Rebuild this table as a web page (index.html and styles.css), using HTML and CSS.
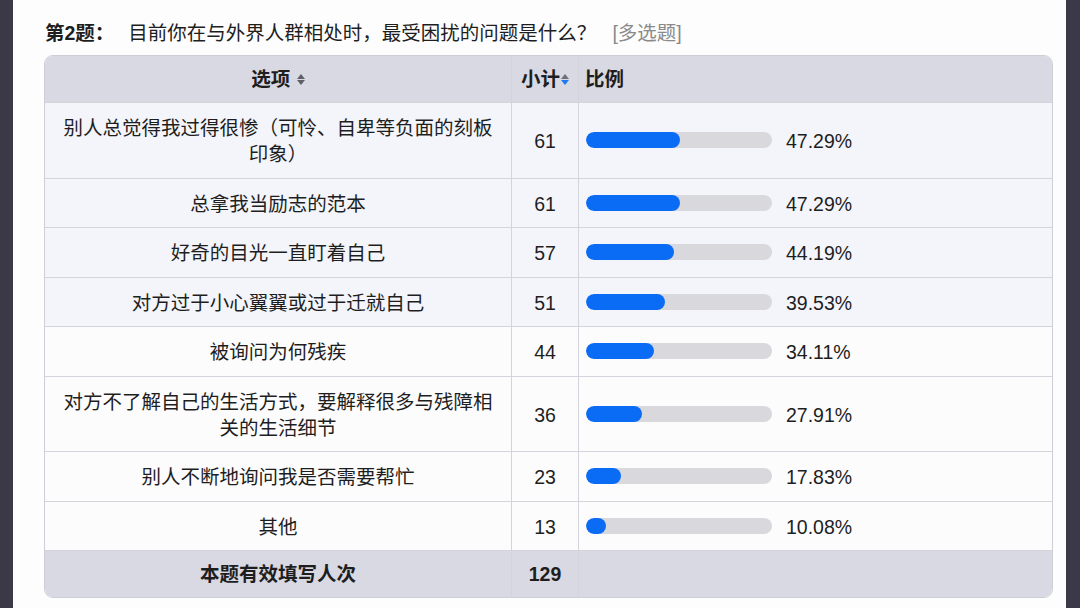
FILE: index.html
```html
<!DOCTYPE html>
<html lang="zh-CN">
<head>
  <meta charset="UTF-8" />
  <meta name="viewport" content="width=device-width, initial-scale=1.0"/>
  <title>第2题 统计结果</title>
  <link rel="stylesheet" href="styles.css">
</head>
<body>
  <div class="page">
    <div class="question">
      <span class="q-no">第2题：</span><span class="q-text">目前你在与外界人群相处时，最受困扰的问题是什么？</span><span class="q-type">[多选题]</span>
    </div>

    <div class="result">
      <table>
        <colgroup>
          <col class="c-opt">
          <col class="c-num">
          <col>
        </colgroup>
        <thead>
          <tr>
            <th class="center">选项 <span class="sort"><i class="up"></i><i class="down"></i></span></th>
            <th class="center">小计<span class="sort active"><i class="up"></i><i class="down"></i></span></th>
            <th class="left">比例</th>
          </tr>
        </thead>
        <tbody>
          <!-- rows -->
          <tr class="tint">
            <td class="opt">别人总觉得我过得很惨（可怜、自卑等负面的刻板印象）</td>
            <td class="num">61</td>
            <td><div class="ratio"><div class="bar"><div class="fill" style="width:94px"></div></div><span class="pct">47.29%</span></div></td>
          </tr>
          <tr class="tint">
            <td class="opt">总拿我当励志的范本</td>
            <td class="num">61</td>
            <td><div class="ratio"><div class="bar"><div class="fill" style="width:94px"></div></div><span class="pct">47.29%</span></div></td>
          </tr>
          <tr class="tint">
            <td class="opt">好奇的目光一直盯着自己</td>
            <td class="num">57</td>
            <td><div class="ratio"><div class="bar"><div class="fill" style="width:88px"></div></div><span class="pct">44.19%</span></div></td>
          </tr>
          <tr class="tint">
            <td class="opt">对方过于小心翼翼或过于迁就自己</td>
            <td class="num">51</td>
            <td><div class="ratio"><div class="bar"><div class="fill" style="width:79px"></div></div><span class="pct">39.53%</span></div></td>
          </tr>
          <tr>
            <td class="opt">被询问为何残疾</td>
            <td class="num">44</td>
            <td><div class="ratio"><div class="bar"><div class="fill" style="width:68px"></div></div><span class="pct">34.11%</span></div></td>
          </tr>
          <tr>
            <td class="opt">对方不了解自己的生活方式，要解释很多与残障相关的生活细节</td>
            <td class="num">36</td>
            <td><div class="ratio"><div class="bar"><div class="fill" style="width:56px"></div></div><span class="pct">27.91%</span></div></td>
          </tr>
          <tr>
            <td class="opt">别人不断地询问我是否需要帮忙</td>
            <td class="num">23</td>
            <td><div class="ratio"><div class="bar"><div class="fill" style="width:35px"></div></div><span class="pct">17.83%</span></div></td>
          </tr>
          <tr>
            <td class="opt">其他</td>
            <td class="num">13</td>
            <td><div class="ratio"><div class="bar"><div class="fill" style="width:20px"></div></div><span class="pct">10.08%</span></div></td>
          </tr>
        </tbody>
        <tfoot>
          <tr>
            <td class="center">本题有效填写人次</td>
            <td class="center">129</td>
            <td></td>
          </tr>
        </tfoot>
      </table>
    </div>
  </div>
</body>
</html>
```

FILE: styles.css
```css
body {
  margin: 0;
  background-color: #3b3848;
  font-family: "Liberation Sans", "Noto Sans CJK SC", sans-serif;
  color: #1e1e1e;
}

.page {
  margin: 0 14px 0 13px;
  height: 608px;
  background-color: #fdfdfd;
  padding: 20px 0 0 31px;
  box-sizing: border-box;
}

.question {
  font-size: 19.5px;
  line-height: 26px;
  margin-left: 1px;
}

.q-no {
  font-weight: bold;
}

.q-text {
  margin-left: 14px;
}

.q-type {
  color: #8a8a8a;
  margin-left: 16px;
}

.result {
  margin-top: 9px;
  width: 1009px;
  border: 1px solid #cdced6;
  border-radius: 9px;
  overflow: hidden;
  box-sizing: border-box;
}

table {
  width: 100%;
  border-collapse: separate;
  border-spacing: 0;
  table-layout: fixed;
  font-size: 19.5px;
}

.c-opt {
  width: 467px;
}

.c-num {
  width: 67px;
}

th, td {
  box-sizing: border-box;
  line-height: 26px;
  border-right: 1px solid #d4d5dc;
  border-bottom: 1px solid #d4d5dc;
}

th:last-child, td:last-child {
  border-right: none;
}

thead th {
  background-color: #d9d9e3;
  padding: 10px 0;
  font-weight: bold;
}

th.center, td.center {
  text-align: center;
}

th.left {
  text-align: left;
  padding-left: 6px;
}

.sort {
  display: inline-flex;
  flex-direction: column;
  gap: 1px;
  vertical-align: middle;
  margin-left: 1px;
  position: relative;
  top: -1px;
}

.sort i {
  display: block;
  width: 0;
  height: 0;
  border-left: 4px solid transparent;
  border-right: 4px solid transparent;
}

.sort .up {
  border-bottom: 5px solid #5f5f68;
}

.sort .down {
  border-top: 5px solid #5f5f68;
}

.sort.active .up {
  border-bottom-color: #6f6f78;
}

.sort.active .down {
  border-top-color: #1a7bf2;
}

tbody td {
  padding: 12px 14px 10.5px;
  background-color: #fcfcfd;
}

tbody tr.tint td {
  background-color: #f3f5fa;
}

td.opt {
  text-align: center;
}

td.num {
  text-align: center;
  padding-left: 0;
  padding-right: 0;
}

.ratio {
  display: flex;
  align-items: center;
  margin-left: -7px;
}

.bar {
  width: 186px;
  height: 16px;
  border-radius: 8px;
  background-color: #d8d8dd;
  overflow: hidden;
  position: relative;
  top: -1px;
}

.fill {
  height: 100%;
  border-radius: 8px;
  background-color: #0a6cf5;
}

.pct {
  margin-left: 14px;
}

tfoot td {
  background-color: #d9d9e3;
  padding: 10px 0;
  font-weight: bold;
  border-bottom: none;
}
```
